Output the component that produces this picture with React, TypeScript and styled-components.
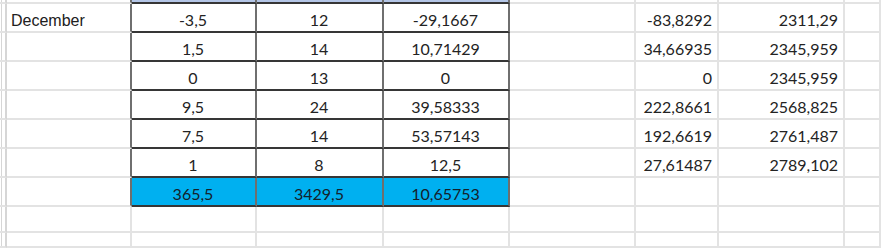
import React from "react";
import styled, { createGlobalStyle } from "styled-components";

const GlobalStyle = createGlobalStyle`
  html, body { margin: 0; padding: 0; background: #ffffff; }
  #root { width: 881px; height: 248px; overflow: hidden; }
`;

const GRID = "#e3e3e3";
const VLINE = "#6f6f6f";
const HLINE = "#363636";
const HEAD = "#b4c6e7";
const TOTAL = "#00b0f0";

const Sheet = styled.div`
  display: grid;
  grid-template-columns: 7px 125px 125px 127px 126px 126px 83px 126px 1fr;
  grid-template-rows: 4px repeat(7, 29px) 26px 1fr;
  width: 881px;
  height: 248px;
  overflow: hidden;
  background: #ffffff;
`;

type Align = "left" | "center" | "right";

const Cell = styled.div<{ $align: Align; $rb: string; $bb: string; $bg: string }>`
  box-sizing: border-box;
  display: flex;
  align-items: flex-end;
  justify-content: ${(p) =>
    p.$align === "left" ? "flex-start" : p.$align === "right" ? "flex-end" : "center"};
  padding: 0 5px 1px 4px;
  border-right: 2px solid ${(p) => p.$rb};
  border-bottom: 2px solid ${(p) => p.$bb};
  background: ${(p) => p.$bg};
  font-family: Lato, "Open Sans", sans-serif;
  font-size: 16px;
  line-height: 20px;
  color: #232323;
  white-space: nowrap;
  overflow: visible;
`;

const Gutter = styled.div`
  box-sizing: border-box;
  border-right: 2px solid #d6d6d6;
  border-bottom: 2px solid ${GRID};
  box-shadow: inset 1px 0 0 #ffffff, inset 2px 0 0 #d6d6d6;
`;

const Label = styled.span`
  font-family: "Liberation Sans", Arial, sans-serif;
  font-size: 16px;
  line-height: 20px;
  color: #202020;
  margin-bottom: -1px;
`;

const Value = styled.span<{ $total?: boolean }>`
  color: ${(p) => (p.$total ? "#14212b" : "#232323")};
`;

// columns: A, B, C, D, E, F, G, H
const rows: string[][] = [
  ["", "", "", "", "", "", "", ""],
  ["December", "-3,5", "12", "-29,1667", "", "-83,8292", "2311,29", ""],
  ["", "1,5", "14", "10,71429", "", "34,66935", "2345,959", ""],
  ["", "0", "13", "0", "", "0", "2345,959", ""],
  ["", "9,5", "24", "39,58333", "", "222,8661", "2568,825", ""],
  ["", "7,5", "14", "53,57143", "", "192,6619", "2761,487", ""],
  ["", "1", "8", "12,5", "", "27,61487", "2789,102", ""],
  ["", "365,5", "3429,5", "10,65753", "", "", "", ""],
  ["", "", "", "", "", "", "", ""],
  ["", "", "", "", "", "", "", ""],
];

const alignFor = (c: number): Align => (c === 0 ? "left" : c <= 3 ? "center" : "right");

export default function App() {
  return (
    <>
      <GlobalStyle />
      <Sheet>
        {rows.map((row, r) => {
          const inTableRows = r <= 7;
          return (
            <React.Fragment key={r}>
              <Gutter />
              {row.map((text, c) => {
                const tableCol = c >= 1 && c <= 3;
                const rb = inTableRows && c <= 3 ? VLINE : GRID;
                const bb = inTableRows && tableCol ? HLINE : GRID;
                const bg =
                  tableCol && r === 0 ? HEAD : tableCol && r === 7 ? TOTAL : "transparent";
                return (
                  <Cell key={c} $align={alignFor(c)} $rb={rb} $bb={bb} $bg={bg}>
                    {c === 0 && text ? (
                      <Label>{text}</Label>
                    ) : text ? (
                      <Value $total={r === 7}>{text}</Value>
                    ) : null}
                  </Cell>
                );
              })}
            </React.Fragment>
          );
        })}
      </Sheet>
    </>
  );
}
